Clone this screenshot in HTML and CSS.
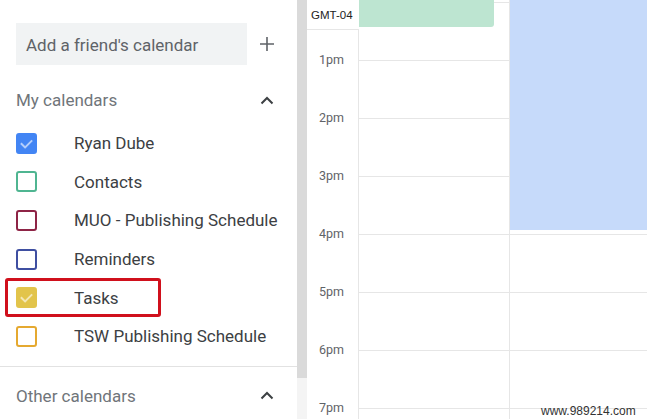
FILE: index.html
```html
<!DOCTYPE html>
<html lang="en">
<head>
    <meta charset="UTF-8">
    <meta name="viewport" content="width=device-width, initial-scale=1.0">
    <title>Calendar</title>
    <link rel="stylesheet" href="styles.css">
</head>
<body>
    <div id="app">
        <div id="sidebar">
            <div class="add-friend">
                <div class="friend-input">Add a friend's calendar</div>
                <svg class="plus" width="16" height="16" viewBox="0 0 16 16">
                    <path d="M8 1v14M1 8h14" stroke="#5f6368" stroke-width="1.6" fill="none"/>
                </svg>
            </div>

            <div class="section-head">
                <span>My calendars</span>
                <svg class="chevron" width="14" height="9" viewBox="0 0 14 9">
                    <path d="M1.5 7.5L7 2l5.5 5.5" stroke="#3c4043" stroke-width="2" fill="none"/>
                </svg>
            </div>

            <ul class="cal-list">
                <li><span class="box checked" style="--c:#4285f4"></span>Ryan Dube</li>
                <li><span class="box" style="--c:#4fb591"></span>Contacts</li>
                <li><span class="box" style="--c:#8e2446"></span>MUO - Publishing Schedule</li>
                <li><span class="box" style="--c:#3f4fa1"></span>Reminders</li>
                <li class="marked"><span class="box checked" style="--c:#e2c44b"></span>Tasks<span class="highlight"></span></li>
                <li><span class="box" style="--c:#e5a930"></span>TSW Publishing Schedule</li>
            </ul>

            <div class="section-head other">
                <span>Other calendars</span>
                <svg class="chevron" width="14" height="9" viewBox="0 0 14 9">
                    <path d="M1.5 7.5L7 2l5.5 5.5" stroke="#3c4043" stroke-width="2" fill="none"/>
                </svg>
            </div>
        </div>

        <div id="scrollbar"><div class="thumb"></div></div>

        <div id="calendar">
            <div class="times">
                <div class="gmt">GMT-04</div>
                <div class="labels">
                    <div>1pm</div>
                    <div>2pm</div>
                    <div>3pm</div>
                    <div>4pm</div>
                    <div>5pm</div>
                    <div>6pm</div>
                    <div>7pm</div>
                </div>
            </div>
            <div class="day first">
                <div class="event green"></div>
                <div class="slot"></div><div class="slot"></div><div class="slot"></div><div class="slot"></div>
                <div class="slot"></div><div class="slot"></div><div class="slot"></div><div class="slot"></div>
            </div>
            <div class="day">
                <div class="event blue"></div>
                <div class="slot"></div><div class="slot"></div><div class="slot"></div><div class="slot"></div>
                <div class="slot"></div><div class="slot"></div><div class="slot"></div><div class="slot"></div>
            </div>
        </div>

        <div class="watermark">www.989214.com</div>
    </div>
</body>
</html>
```

FILE: styles.css
```css
body {
    margin: 0;
    padding: 0;
    background: #fff;
    font-family: Roboto, Arial, sans-serif;
    overflow: hidden;
}
#app {
    display: flex;
    width: 647px;
    height: 419px;
    overflow: hidden;
    position: relative;
}
#sidebar {
    width: 297px;
    flex: none;
}
.add-friend {
    display: flex;
    align-items: center;
    margin: 23px 0 0 16px;
}
.friend-input {
    width: 221px;
    height: 42px;
    line-height: 44px;
    padding-left: 10px;
    background: #f1f3f4;
    color: #5f6368;
    font-size: 17px;
}
.plus {
    margin-left: 12px;
}
.section-head {
    display: flex;
    align-items: center;
    justify-content: space-between;
    height: 40px;
    margin-top: 15px;
    padding: 0 23px 0 16px;
    color: #70757a;
    font-size: 17px;
}
.section-head.other {
    margin-top: 0;
    border-top: 1px solid #e2e2e2;
    height: 58px;
}
.cal-list {
    list-style: none;
    margin: 4px 0 10px;
    padding: 0;
}
.cal-list li {
    display: flex;
    align-items: center;
    height: 38.6px;
    padding-left: 16px;
    color: #3c4043;
    font-size: 17px;
    position: relative;
}
.box {
    width: 21px;
    height: 21px;
    box-sizing: border-box;
    border: 2.5px solid var(--c);
    border-radius: 3px;
    margin-right: 37px;
    position: relative;
}
.box.checked {
    background: var(--c);
}
.box.checked::after {
    content: "";
    position: absolute;
    left: 5px;
    top: 2px;
    width: 5px;
    height: 9px;
    border: solid rgba(255, 255, 255, 0.6);
    border-width: 0 2px 2px 0;
    transform: rotate(45deg);
}
.highlight {
    position: absolute;
    left: 5px;
    top: 0;
    width: 156px;
    height: 39px;
    box-sizing: border-box;
    border: 3px solid #d0101c;
    border-radius: 3px;
}
#scrollbar {
    width: 10px;
    flex: none;
    background: #f4f4f4;
}
.thumb {
    height: 378px;
    background: #dadada;
}
#calendar {
    flex: 1;
    display: flex;
}
.times {
    width: 52px;
    flex: none;
}
.gmt {
    height: 30px;
    box-sizing: border-box;
    border-bottom: 1px solid #e6e6e6;
    font-family: "Liberation Sans", Arial, sans-serif;
    font-size: 11.5px;
    color: #222;
    line-height: 30px;
    padding-left: 4px;
}
.labels {
    border-right: 1px solid #e6e6e6;
    padding-top: 22px;
    height: 400px;
}
.labels div {
    height: 58px;
    line-height: 16px;
    text-align: right;
    padding-right: 14px;
    font-size: 12.5px;
    color: #5f6368;
}
.day {
    width: 150px;
    flex: none;
    position: relative;
    padding-top: 2px;
}
.day.first {
    border-right: 1px solid #e6e6e6;
}
.slot {
    height: 58px;
    box-sizing: border-box;
    border-top: 1px solid #e6e6e6;
}
.event {
    position: absolute;
    top: 0;
    left: 0;
}
.event.green {
    width: 135px;
    height: 27px;
    background: #bde5d1;
    border-radius: 0 0 3px 0;
}
.event.blue {
    width: 140px;
    height: 230px;
    background: #c6dafa;
}
.watermark {
    position: absolute;
    left: 541px;
    top: 404px;
    font-family: "Liberation Sans", Arial, sans-serif;
    font-size: 12px;
    color: #333;
}
```
